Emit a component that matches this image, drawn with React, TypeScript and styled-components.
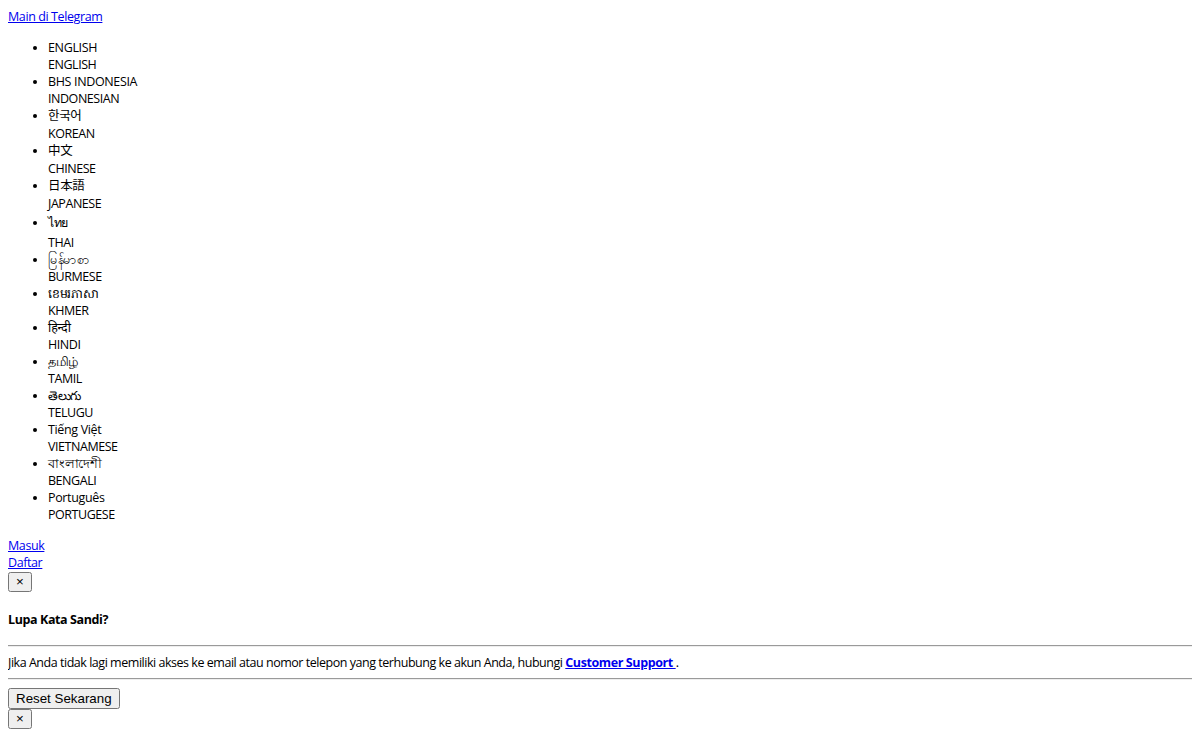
import React from 'react';
import styled, { createGlobalStyle } from 'styled-components';

const GlobalStyle = createGlobalStyle`
  body {
    margin: 8px;
    background: #ffffff;
    color: #000000;
    font-family: "Open Sans", "Noto Sans", "Noto Sans CJK KR", "Noto Sans CJK SC", sans-serif;
    font-size: 12.5px;
    line-height: 17px;
  }
`;

const Page = styled.div`
  display: flex;
  flex-direction: column;
  align-items: flex-start;
`;

const TextLink = styled.a`
  color: #0000ee;
  text-decoration: underline;
  letter-spacing: -0.4px;
`;

const LangList = styled.ul`
  margin: 14px 0;
  padding-left: 40px;
  list-style: disc;
`;

const LangItem = styled.li`
  line-height: 17px;
`;

const Native = styled.div<{ $h?: number }>`
  height: ${p => p.$h ?? 17}px;
  line-height: ${p => p.$h ?? 17}px;
  white-space: nowrap;
  letter-spacing: -0.35px;
`;

const English = styled.div`
  height: 17px;
  text-transform: uppercase;
  letter-spacing: -0.45px;
`;

const CloseButton = styled.button<{ $gap?: number }>`
  font-family: "Liberation Sans", Arial, sans-serif;
  font-size: 13.333px;
  height: 20px;
  padding: 0 6px;
  margin-top: ${p => p.$gap ?? 1}px;
  line-height: 16px;
`;

const Modal = styled.div`
  width: 100%;
  display: flex;
  flex-direction: column;
  align-items: flex-start;
`;

const Heading = styled.h5`
  font-size: 12.5px;
  font-weight: 700;
  line-height: 17px;
  margin: 19px 0 17px;
  letter-spacing: -0.4px;
`;

const Rule = styled.hr`
  width: 100%;
  margin: 0;
  border: none;
  border-top: 1px solid #9a9a9a;
  border-bottom: 1px solid #eeeeee;
  height: 0;
`;

const Body = styled.p`
  margin: 7px 0;
  line-height: 17px;
  letter-spacing: -0.47px;
`;

const ResetButton = styled.button`
  font-family: "Liberation Sans", Arial, sans-serif;
  font-size: 13.333px;
  height: 21px;
  padding: 0 6px;
  margin-top: 8px;
`;

const languages: { native: string; english: string; h?: number }[] = [
  { native: 'ENGLISH', english: 'ENGLISH' },
  { native: 'BHS INDONESIA', english: 'INDONESIAN' },
  { native: '한국어', english: 'KOREAN', h: 18 },
  { native: '中文', english: 'CHINESE', h: 18 },
  { native: '日本語', english: 'JAPANESE', h: 18 },
  { native: 'ไทย', english: 'THAI', h: 22 },
  { native: 'မြန်မာစာ', english: 'BURMESE' },
  { native: 'ខេមរភាសា', english: 'KHMER' },
  { native: 'हिन्दी', english: 'HINDI' },
  { native: 'தமிழ்', english: 'TAMIL' },
  { native: 'తెలుగు', english: 'TELUGU' },
  { native: 'Tiếng Việt', english: 'VIETNAMESE' },
  { native: 'বাংলাদেশী', english: 'BENGALI' },
  { native: 'Português', english: 'PORTUGESE' },
];

export default function App() {
  return (
    <>
      <GlobalStyle />
      <Page>
        <TextLink href="#">Main di Telegram</TextLink>
        <LangList>
          {languages.map(l => (
            <LangItem key={l.english}>
              <Native $h={l.h}>{l.native}</Native>
              <English>{l.english}</English>
            </LangItem>
          ))}
        </LangList>
        <TextLink href="#">Masuk</TextLink>
        <TextLink href="#">Daftar</TextLink>
        <CloseButton type="button">×</CloseButton>
        <Modal>
          <Heading>Lupa Kata Sandi?</Heading>
          <Rule />
          <Body>
            Jika Anda tidak lagi memiliki akses ke email atau nomor telepon yang terhubung ke akun Anda, hubungi{' '}
            <TextLink href="#"><strong>Customer Support </strong></TextLink>.
          </Body>
          <Rule />
          <ResetButton type="button">Reset Sekarang</ResetButton>
          <CloseButton type="button" $gap={0}>×</CloseButton>
        </Modal>
      </Page>
    </>
  );
}
